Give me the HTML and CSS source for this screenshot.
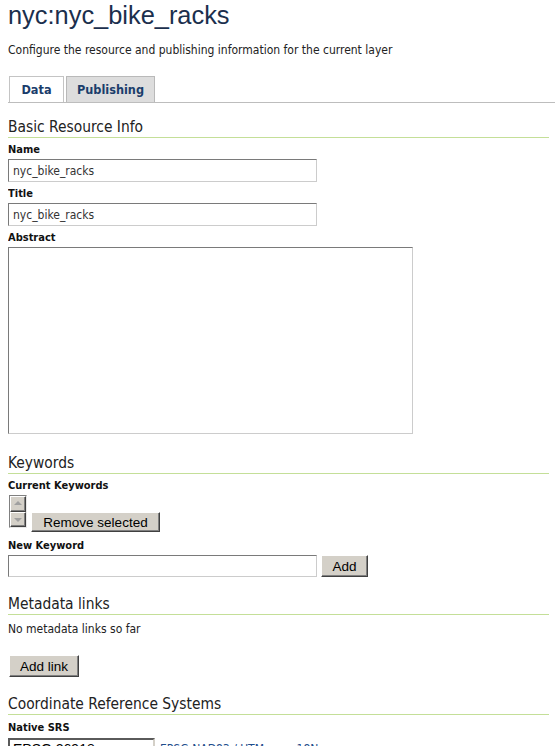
FILE: index.html
```html
<!DOCTYPE html>
<html lang="en">
<head>
<meta charset="utf-8">
<title>nyc:nyc_bike_racks</title>
<link rel="stylesheet" href="styles.css">
</head>
<body>
<div class="page">
  <h1 class="title">nyc:nyc_bike_racks</h1>
  <p class="desc">Configure the resource and publishing information for the current layer</p>

  <ul class="tabs">
    <li class="tab tab-data active">Data</li>
    <li class="tab tab-pub">Publishing</li>
  </ul>

  <div class="content">
    <h3 class="sec sec-first">Basic Resource Info</h3>
    <div class="field">
      <label class="lbl">Name</label>
      <input class="text" type="text" value="nyc_bike_racks">
    </div>
    <div class="field">
      <label class="lbl">Title</label>
      <input class="text" type="text" value="nyc_bike_racks">
    </div>
    <div class="field">
      <label class="lbl">Abstract</label>
      <textarea class="area"></textarea>
    </div>

    <h3 class="sec sec-kw">Keywords</h3>
    <div class="field field-tight">
      <label class="lbl">Current Keywords</label>
      <div class="kw-row">
        <div class="listbox">
          <div class="sbtn"><span class="arr arr-up"></span></div>
          <div class="sbtn"><span class="arr arr-down"></span></div>
        </div>
        <button class="btn btn-remove" type="button">Remove selected</button>
      </div>
    </div>
    <div class="field field-new">
      <label class="lbl">New Keyword</label>
      <div class="add-row">
        <input class="text text-kw" type="text" value="">
        <button class="btn btn-add" type="button">Add</button>
      </div>
    </div>

    <h3 class="sec sec-gap">Metadata links</h3>
    <p class="note">No metadata links so far</p>
    <button class="btn btn-link" type="button">Add link</button>

    <h3 class="sec sec-gap">Coordinate Reference Systems</h3>
    <div class="field field-srs">
      <label class="lbl">Native SRS</label>
      <div class="srs-row">
        <input class="srs" type="text" value="EPSG:26918">
        <a class="srs-link" href="#">EPSG:NAD83 / UTM zone 18N</a>
      </div>
    </div>
  </div>
</div>
</body>
</html>
```

FILE: styles.css
```css
html, body {
  overflow: hidden;
}

body {
  margin: 0 0 0 8px;
  background: #ffffff;
  color: #222222;
  font-family: "DejaVu Sans Condensed", "DejaVu Sans", sans-serif;
  font-stretch: condensed;
  font-size: 12px;
}

.title {
  margin: 0;
  font-family: "Liberation Sans", Arial, sans-serif;
  font-weight: normal;
  font-size: 25.4px;
  line-height: 30px;
  color: #1b2f4d;
}

.desc {
  margin: 12px 0 0 0;
  font-size: 12px;
  line-height: 16px;
  color: #222222;
}

.tabs {
  display: flex;
  gap: 2px;
  list-style: none;
  margin: 18px 0 0 0;
  padding: 0 0 0 1px;
  border-bottom: 1px solid #bdbdbd;
}

.tab {
  box-sizing: border-box;
  height: 26px;
  line-height: 25px;
  text-align: center;
  font-weight: bold;
  font-size: 12.6px;
  color: #1b3d6b;
  border: 1px solid #c4c4c4;
  border-bottom: none;
}

.tab-data {
  width: 55px;
  background: #ffffff;
}

.tab-pub {
  width: 89px;
  background: #dddddd;
  border-color: #b9b9b9;
}

.content {
  padding-right: 6px;
}

.sec {
  margin: 18px 0 0 0;
  font-size: 15.4px;
  font-weight: normal;
  line-height: 18px;
  padding-bottom: 1px;
  border-bottom: 1px solid #c4df98;
  color: #222222;
}

.sec-first {
  margin-top: 15px;
}

.sec-kw {
  margin-top: 20px;
}

.field {
  margin-top: 5px;
}

.field-new {
  margin-top: 7px;
}

.field-srs {
  margin-top: 6px;
}

.lbl {
  display: block;
  font-weight: bold;
  font-size: 11px;
  line-height: 14px;
  margin-bottom: 2px;
  color: #111111;
}

.text {
  display: block;
  box-sizing: border-box;
  width: 309px;
  height: 23px;
  margin: 0;
  padding: 0 4px;
  font-family: "DejaVu Sans Condensed", "DejaVu Sans", sans-serif;
  font-stretch: condensed;
  font-size: 12px;
  color: #333333;
  background: #ffffff;
  border: 1px solid;
  border-color: #7a7a7a #cccccc #cccccc #7a7a7a;
  outline: none;
}

.area {
  display: block;
  box-sizing: border-box;
  width: 405px;
  height: 187px;
  margin: 0;
  padding: 2px;
  resize: none;
  background: #ffffff;
  border: 1px solid;
  border-color: #7a7a7a #cccccc #cccccc #7a7a7a;
  outline: none;
}

.kw-row {
  display: flex;
  align-items: flex-end;
  gap: 4px;
}

.listbox {
  box-sizing: border-box;
  width: 18px;
  height: 33px;
  margin: 0 0 4px 1px;
  display: flex;
  flex-direction: column;
  background: #d4d0c8;
  border: 1px solid;
  border-color: #808080 #e8e8e8 #e8e8e8 #808080;
}

.sbtn {
  flex: 1;
  box-sizing: border-box;
  display: flex;
  align-items: center;
  justify-content: center;
  background: #d4d0c8;
  border: 1px solid;
  border-color: #ffffff #404040 #404040 #ffffff;
  box-shadow: inset -1px -1px 0 #808080;
}

.arr {
  width: 0;
  height: 0;
  border-left: 4px solid transparent;
  border-right: 4px solid transparent;
}

.arr-up {
  border-bottom: 4px solid #a0a0a0;
  margin-top: -1px;
}

.arr-down {
  border-top: 4px solid #a0a0a0;
  margin-top: 1px;
}

.btn {
  box-sizing: border-box;
  margin: 0;
  padding: 0;
  font-family: "Liberation Sans", Arial, sans-serif;
  font-size: 13.5px;
  color: #000000;
  background: #d4d0c8;
  border: 1px solid;
  border-color: #ffffff #404040 #404040 #ffffff;
  box-shadow: inset -1px -1px 0 #808080;
  text-align: center;
}

.btn-remove {
  width: 129px;
  height: 20px;
  line-height: 17px;
}

.add-row {
  display: flex;
  align-items: flex-start;
  gap: 4px;
}

.text-kw {
  height: 22px;
}

.btn-add {
  width: 47px;
  height: 22px;
  line-height: 19px;
}

.note {
  margin: 6px 0 0 0;
  font-size: 12px;
  line-height: 16px;
  color: #222222;
}

.btn-link {
  display: block;
  width: 70px;
  height: 22px;
  line-height: 19px;
  margin: 18px 0 0 1px;
}

.srs-row {
  display: flex;
  align-items: flex-start;
  gap: 5px;
}

.srs {
  box-sizing: border-box;
  width: 147px;
  height: 22px;
  margin: 1px 0 0 0;
  padding: 0 3px;
  font-family: "Liberation Sans", Arial, sans-serif;
  font-size: 14px;
  color: #000000;
  background: #ffffff;
  border: 2px solid;
  border-color: #5a5a5a #d4d0c8 #d4d0c8 #5a5a5a;
  outline: none;
}

.srs-link {
  font-size: 12px;
  line-height: 16px;
  margin-top: 4px;
  color: #1f4e8c;
  text-decoration: none;
}
```
